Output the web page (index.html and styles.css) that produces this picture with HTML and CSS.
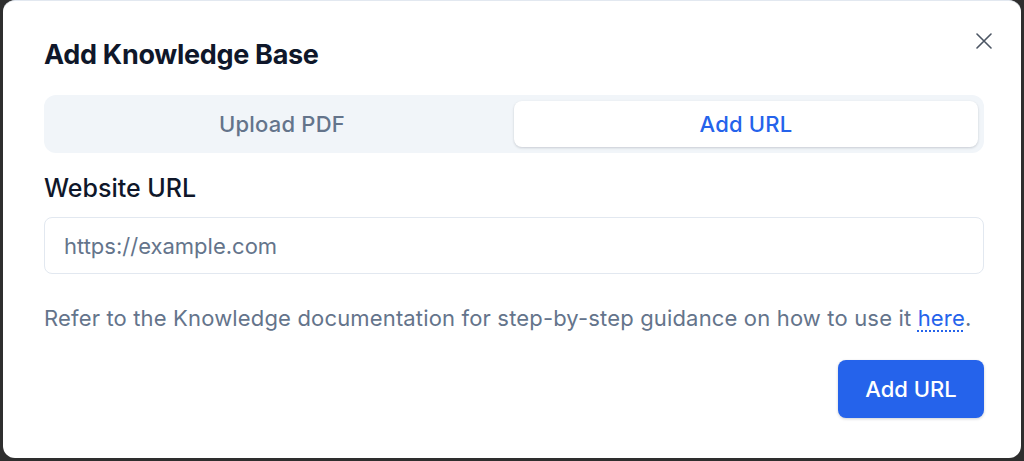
FILE: index.html
```html
<!DOCTYPE html>
<html>
<head>
<meta charset="utf-8">
<link rel="stylesheet" href="styles.css">
</head>
<body>
<div class="modal">
  <button class="close" aria-label="Close">
    <svg width="16" height="16" viewBox="0 0 16 16" fill="none" stroke="#4b5563" stroke-width="1.6" stroke-linecap="round"><path d="M1 1L15 15M15 1L1 15"/></svg>
  </button>
  <h1 class="title">Add Knowledge Base</h1>
  <div class="tabs">
    <div class="tab">Upload PDF</div>
    <div class="tab active">Add URL</div>
  </div>
  <label class="label">Website URL</label>
  <div class="input">https://example.com</div>
  <p class="help">Refer to the Knowledge documentation for step-by-step guidance on how to use it <a class="link">here</a>.</p>
  <div class="actions">
    <button class="primary">Add URL</button>
  </div>
</div>
</body>
</html>
```
FILE: styles.css
```css
html, body {
  margin: 0;
  padding: 0;
  background: #2e2e2e;
  font-family: Inter, "Noto Sans", sans-serif;
}
body {
  padding: 0 3px 3px 3px;
  height: 461px;
  box-sizing: border-box;
  overflow: hidden;
}
.modal {
  position: relative;
  background: #ffffff;
  border-top: 1px solid #e2e8f0;
  border-radius: 12px;
  height: 458px;
  box-sizing: border-box;
  padding: 38px 37px 0 41px;
  display: flex;
  flex-direction: column;
}
.close {
  position: absolute;
  top: 32px;
  right: 29px;
  width: 16px;
  height: 16px;
  padding: 0;
  border: 0;
  background: none;
  display: flex;
}
.title {
  margin: 0;
  font-size: 27px;
  line-height: 32px;
  font-weight: 700;
  color: #0f172a;
  letter-spacing: -0.3px;
}
.tabs {
  margin-top: 24px;
  background: #f1f5f9;
  border-radius: 12px;
  padding: 6px;
  display: grid;
  grid-template-columns: 1fr 1fr;
  height: 58px;
  box-sizing: border-box;
}
.tab {
  display: flex;
  align-items: center;
  justify-content: center;
  font-size: 22px;
  font-weight: 500;
  letter-spacing: 0.2px;
  color: #64748b;
  border-radius: 8px;
}
.tab.active {
  background: #ffffff;
  color: #2563eb;
  box-shadow: 0 1px 3px rgba(15, 23, 42, 0.12), 0 1px 2px rgba(15, 23, 42, 0.06);
}
.label {
  margin-top: 19px;
  font-size: 25px;
  line-height: 32px;
  font-weight: 500;
  color: #0f172a;
}
.input {
  margin-top: 13px;
  height: 57px;
  box-sizing: border-box;
  border: 1px solid #e2e8f0;
  border-radius: 8px;
  padding: 0 19px;
  display: flex;
  align-items: center;
  font-size: 22px;
  color: #64748b;
}
.help {
  margin: 30px 0 0 0;
  font-size: 22px;
  line-height: 28px;
  letter-spacing: 0.16px;
  color: #64748b;
}
.link {
  color: #2563eb;
  text-decoration: underline dotted;
  text-decoration-thickness: 2px;
  text-underline-offset: 4px;
}
.actions {
  margin-top: 28px;
  display: flex;
  justify-content: flex-end;
}
.primary {
  width: 146px;
  height: 58px;
  border: 0;
  border-radius: 8px;
  background: #2563eb;
  color: #ffffff;
  font-family: inherit;
  font-size: 22px;
  font-weight: 500;
  box-shadow: 0 1px 3px rgba(15, 23, 42, 0.2);
}
```
